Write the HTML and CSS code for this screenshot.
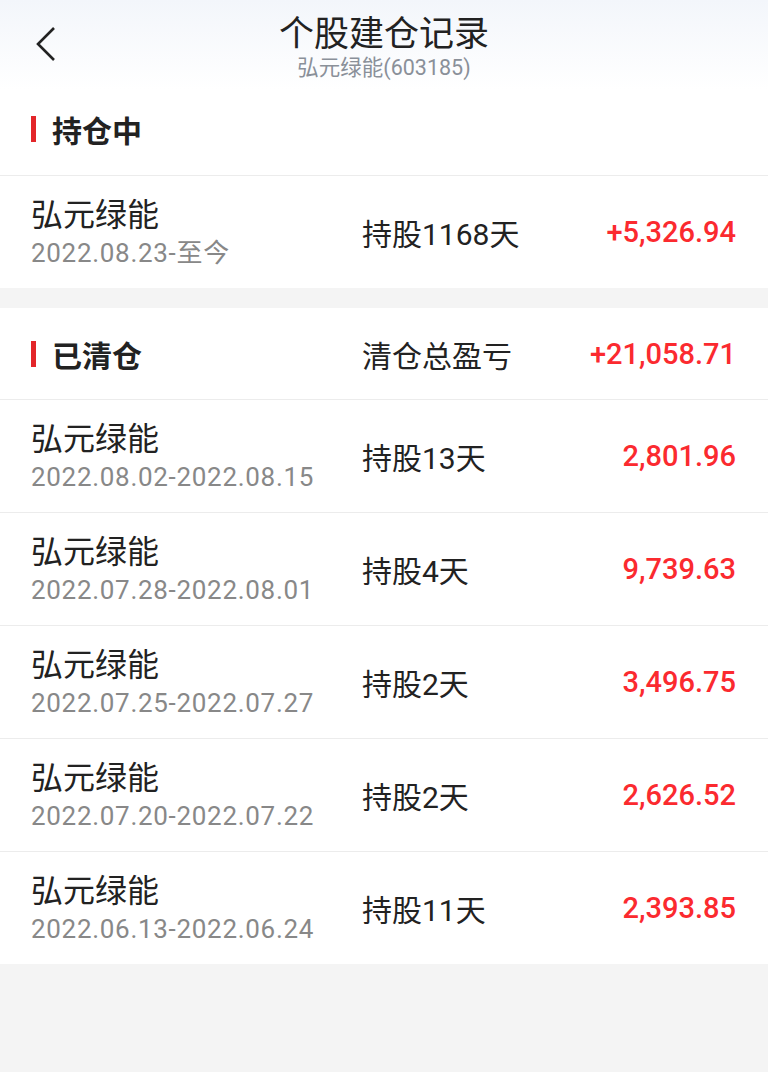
FILE: index.html
```html
<!DOCTYPE html>
<html lang="zh-CN">
<head>
  <meta charset="UTF-8" />
  <meta name="viewport" content="width=device-width, initial-scale=1.0" />
  <title>个股建仓记录</title>
  <link rel="stylesheet" href="styles.css">
</head>
<body>
  <header class="topbar">
    <button class="back" aria-label="返回">
      <svg width="24" height="36" viewBox="0 0 24 36">
        <polyline points="20,2 4,18 20,34" fill="none" stroke="#222" stroke-width="2.6" />
      </svg>
    </button>
    <div class="title">个股建仓记录</div>
    <div class="subtitle">弘元绿能(603185)</div>
  </header>

  <section class="block">
    <div class="section-head">
      <span class="section-name">持仓中</span>
    </div>
    <div class="row">
      <div class="stock">
        <div class="name">弘元绿能</div>
        <div class="dates">2022.08.23-至今</div>
      </div>
      <div class="days">持股1168天</div>
      <div class="pnl">+5,326.94</div>
    </div>
  </section>

  <section class="block">
    <div class="section-head row-grid">
      <span class="section-name">已清仓</span>
      <span class="days">清仓总盈亏</span>
      <span class="pnl">+21,058.71</span>
    </div>
    <div class="row">
      <div class="stock">
        <div class="name">弘元绿能</div>
        <div class="dates">2022.08.02-2022.08.15</div>
      </div>
      <div class="days">持股13天</div>
      <div class="pnl">2,801.96</div>
    </div>
    <div class="row">
      <div class="stock">
        <div class="name">弘元绿能</div>
        <div class="dates">2022.07.28-2022.08.01</div>
      </div>
      <div class="days">持股4天</div>
      <div class="pnl">9,739.63</div>
    </div>
    <div class="row">
      <div class="stock">
        <div class="name">弘元绿能</div>
        <div class="dates">2022.07.25-2022.07.27</div>
      </div>
      <div class="days">持股2天</div>
      <div class="pnl">3,496.75</div>
    </div>
    <div class="row">
      <div class="stock">
        <div class="name">弘元绿能</div>
        <div class="dates">2022.07.20-2022.07.22</div>
      </div>
      <div class="days">持股2天</div>
      <div class="pnl">2,626.52</div>
    </div>
    <div class="row">
      <div class="stock">
        <div class="name">弘元绿能</div>
        <div class="dates">2022.06.13-2022.06.24</div>
      </div>
      <div class="days">持股11天</div>
      <div class="pnl">2,393.85</div>
    </div>
  </section>
</body>
</html>
```

FILE: styles.css
```css
body {
  margin: 0;
  background: #f4f4f4;
  color: #222;
  font-family: Roboto, "Noto Sans CJK SC", sans-serif;
}

.topbar {
  position: relative;
  height: 90px;
  background: linear-gradient(#f3f6fb, #fff);
  text-align: center;
}

.back {
  position: absolute;
  left: 34px;
  top: 26px;
  padding: 0;
  border: none;
  background: none;
}

.title {
  padding-top: 13px;
  font-size: 35px;
  line-height: 44px;
}

.subtitle {
  color: #8a9099;
  font-size: 21.5px;
  line-height: 22px;
}

.block {
  background: #fff;
  margin-bottom: 20px;
}

.section-head {
  height: 86px;
  padding: 0 32px 7px 31px;
  box-sizing: border-box;
  display: flex;
  align-items: center;
  border-bottom: 1px solid #ececec;
}

.block + .block .section-head {
  height: 92px;
  padding-bottom: 0;
}

.section-name {
  display: flex;
  align-items: center;
  gap: 16px;
  font-size: 30px;
  font-weight: bold;
}

.section-name::before {
  content: "";
  width: 5px;
  height: 26px;
  background: #e3262a;
}

.row, .row-grid {
  display: grid;
  grid-template-columns: 331px 1fr auto;
  align-items: center;
}

.row {
  height: 112px;
  padding: 0 32px 0 31px;
  border-bottom: 1px solid #ececec;
}

.row:last-child {
  border-bottom: none;
}

.name {
  font-size: 32px;
  line-height: 42px;
}

.dates {
  color: #888;
  font-size: 26px;
  line-height: 34px;
  letter-spacing: 0.7px;
}

.days {
  font-size: 30px;
}

.pnl {
  color: #fb2a2f;
  font-size: 29px;
  font-weight: 500;
  text-align: right;
}
```
